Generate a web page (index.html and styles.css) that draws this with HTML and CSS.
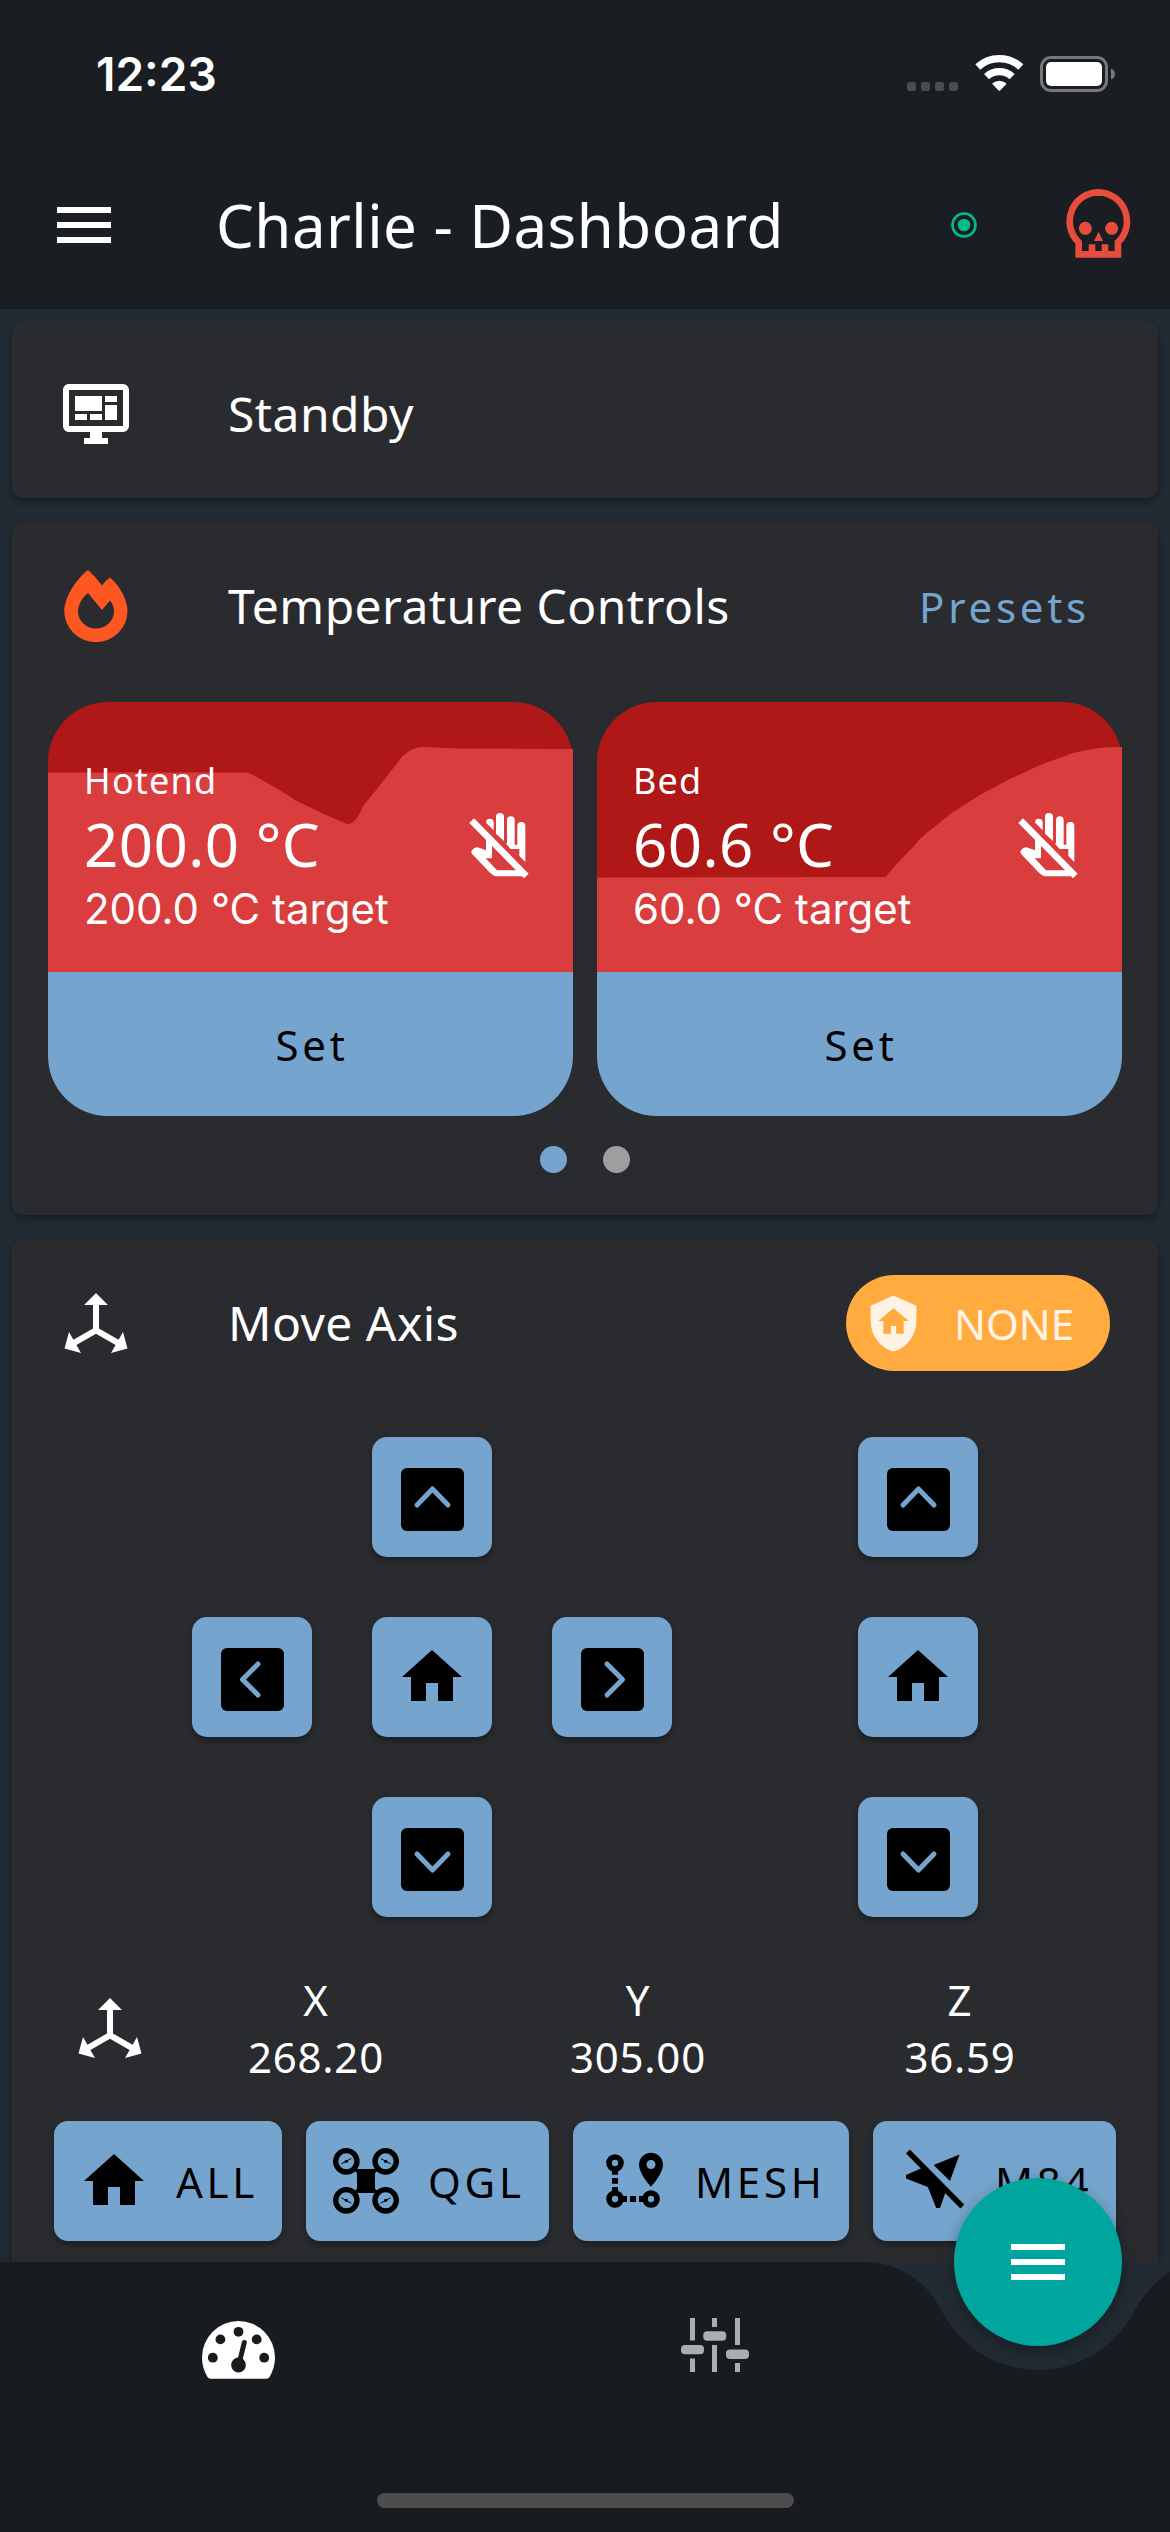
FILE: index.html
```html
<!DOCTYPE html>
<html lang="en">
<head>
<meta charset="utf-8">
<title>Charlie - Dashboard</title>
<link rel="stylesheet" href="styles.css">
</head>
<body>
<svg class="defs" width="0" height="0">
  <symbol id="i-menu" viewBox="0 0 24 24"><path d="M3 6H21V8H3V6M3 11H21V13H3V11M3 16H21V18H3V16Z"/></symbol>
  <symbol id="i-home" viewBox="0 0 24 24"><path d="M10,20V14H14V20H19V12H22L12,3L2,12H5V20H10Z"/></symbol>
  <symbol id="i-axis" viewBox="0 0 24 24"><path d="M12,2L16,6H13V13.85L19.53,17.61L21,15.03L22.5,20.5L17,21.96L18.53,19.35L12,15.58L5.47,19.35L7,21.96L1.5,20.5L3,15.03L4.47,17.61L11,13.85V6H8L12,2Z"/></symbol>
  <symbol id="i-hand" viewBox="27 68 180 198">
    <path d="M28 98L42 84L206 250L192 264Z"/>
    <path d="M78 97A11.500 11.500 0 0 1 101 97V120Z"/>
    <path d="M108 80A12 12 0 0 1 132 80V152L108 130Z"/>
    <path d="M141 89A11.500 11.500 0 0 1 164 89V163H172V107A12 12 0 0 1 196 107V215L178 197V176H152L138 160L141 158Z"/>
    <path fill-rule="evenodd" d="M78 142V180L57 172Q45 168 36 180Q31 186 37 192L90 247Q101 258 113 258H188L196 250L86 138ZM96 160V204H77L111 240H176Z"/>
  </symbol>
  <symbol id="i-up" viewBox="0 0 63 63"><rect width="63" height="63" rx="6"/><path class="chev" d="M16 37L31.500 21L47 37"/></symbol>
  <symbol id="i-down" viewBox="0 0 63 63"><rect width="63" height="63" rx="6"/><path class="chev" d="M16 26L31.500 42L47 26"/></symbol>
  <symbol id="i-left" viewBox="0 0 63 63"><rect width="63" height="63" rx="6"/><path class="chev" d="M37 16L21.500 31.500L37 47"/></symbol>
  <symbol id="i-right" viewBox="0 0 63 63"><rect width="63" height="63" rx="6"/><path class="chev" d="M26 16L41.500 31.500L26 47"/></symbol>
</svg>

<div class="phone">
  <header class="top">
    <div class="status">
      <span class="clock">12:23</span>
      <div class="signals">
        <div class="cell"><i></i><i></i><i></i><i></i></div>
        <svg class="wifi" viewBox="254 45 147 110">
          <path class="arc" d="M262.400 81A96 96 0 0 1 391.600 81"/>
          <path class="arc" d="M288.600 109.800A57 57 0 0 1 365.400 109.800"/>
          <path d="M306 130Q327 114 348 130Q348 132 346 134L330 151Q327 154 324 151L308 134Q306 132 306 130Z"/>
        </svg>
        <svg class="battery" viewBox="0 0 76 36">
          <rect x="1.500" y="1.500" width="65" height="33" rx="9.500" fill="none" stroke="#77787b" stroke-width="3"/>
          <rect x="6" y="6" width="56" height="24" rx="5" fill="#fff"/>
          <path d="M71 12.500Q75 14 75 18T71 23.500Z" fill="#77787b"/>
        </svg>
      </div>
    </div>
    <div class="appbar">
      <svg class="icon"><use href="#i-menu"/></svg>
      <h1>Charlie - Dashboard</h1>
      <svg class="online" viewBox="0 0 26 26"><circle cx="13" cy="13" r="11.500"/><circle class="core" cx="13" cy="13" r="6.300"/></svg>
      <svg class="skull" viewBox="0 0 196 208">
        <path class="line" d="M98 10A87 87 0 0 0 38 160V196H156V160A87 87 0 0 0 98 10Z"/>
        <circle cx="58" cy="118" r="19.500"/><circle cx="137" cy="118" r="19.500"/>
        <path d="M98 128L111 156H84ZM68 166H88V190H68ZM107 166H127V190H107Z"/>
      </svg>
    </div>
  </header>

  <main class="content">
    <section class="card standby">
      <div class="head">
        <svg class="icon" viewBox="0 0 24 24"><path d="M21,16V4H3V16H21M21,2A2,2 0 0,1 23,4V16A2,2 0 0,1 21,18H14V20H16V22H8V20H10V18H3C1.890,18 1,17.100 1,16V4C1,2.890 1.890,2 3,2H21M5,6H14V11H5V6M15,6H19V8H15V6M19,9V14H15V9H19M5,12H9V14H5V12M10,12H14V14H10V12Z"/></svg>
        <h2>Standby</h2>
      </div>
    </section>

    <section class="card temps">
      <div class="head">
        <svg class="icon flame" viewBox="0 0 72 72"><path fill-rule="evenodd" d="M28 0Q36 7 42 15.500Q46 10 50 7.500C61 17 67.500 31 67.500 41A31.500 31 0 0 1 4.300 41C4.300 28 16 9 28 0ZM28 23C22 28 18 35 18 41.500A18 17 0 0 0 54 41.500C54 38 53 34 50 30.500L42 40Z"/></svg>
        <h2>Temperature Controls</h2>
        <span class="presets">Presets</span>
      </div>
      <div class="tiles">
        <div class="tile">
          <div class="reading">
            <svg class="graph" viewBox="0 0 525 270"><path d="M0 70.500H197Q201 70.500 205 73L239 92.500Q246 98 254 101.500L277 112.500L297 121Q303 124 308 117L312 111Q315 103 318 100.500L334.700 79.800L353.800 55Q365 44 376 45Q400 46 411 46.500L525 47V270H0Z"/></svg>
            <div class="values"><p class="name">Hotend</p><p class="now">200.0 °C</p><p class="target">200.0 °C target</p></div>
            <svg class="hand"><use href="#i-hand"/></svg>
          </div>
          <button class="set">Set</button>
        </div>
        <div class="tile">
          <div class="reading">
            <svg class="graph" viewBox="0 0 525 270"><path d="M0 175.500L288.500 175L297 164.800L316 145Q322 137 329 131.500L355.500 110.500L382 93.500L412 77.500L442 63.400L476 51Q500 45 517 45H525V270H0Z"/></svg>
            <div class="values"><p class="name">Bed</p><p class="now">60.6 °C</p><p class="target">60.0 °C target</p></div>
            <svg class="hand"><use href="#i-hand"/></svg>
          </div>
          <button class="set">Set</button>
        </div>
      </div>
      <div class="pager"><i class="on"></i><i></i></div>
    </section>

    <section class="card move">
      <div class="head">
        <svg class="icon"><use href="#i-axis"/></svg>
        <h2>Move Axis</h2>
        <span class="chip">
          <svg viewBox="0 0 24 24"><path d="M11,13H13V16H16V11H18L12,6L6,11H8V16H11V13M12,1L21,5V11C21,16.550 17.160,21.740 12,23C6.840,21.740 3,16.550 3,11V5L12,1Z"/></svg>
          <span>NONE</span>
        </span>
      </div>
      <div class="pads">
        <div class="pad-xy">
          <button class="key n"><svg class="arrow"><use href="#i-up"/></svg></button>
          <button class="key w"><svg class="arrow"><use href="#i-left"/></svg></button>
          <button class="key c"><svg class="icon"><use href="#i-home"/></svg></button>
          <button class="key e"><svg class="arrow"><use href="#i-right"/></svg></button>
          <button class="key s"><svg class="arrow"><use href="#i-down"/></svg></button>
        </div>
        <div class="pad-z">
          <button class="key"><svg class="arrow"><use href="#i-up"/></svg></button>
          <button class="key"><svg class="icon"><use href="#i-home"/></svg></button>
          <button class="key"><svg class="arrow"><use href="#i-down"/></svg></button>
        </div>
      </div>
      <div class="position">
        <svg class="icon"><use href="#i-axis"/></svg>
        <div class="coord"><span>X</span><span>268.20</span></div>
        <div class="coord"><span>Y</span><span>305.00</span></div>
        <div class="coord"><span>Z</span><span>36.59</span></div>
      </div>
      <div class="actions">
        <button class="act all"><svg class="icon"><use href="#i-home"/></svg><span>ALL</span></button>
        <button class="act qgl">
          <svg class="icon" viewBox="30 45 216 216">
            <g class="ring"><circle cx="79" cy="94" r="32"/><circle cx="197" cy="94" r="32"/><circle cx="79" cy="211" r="32"/><circle cx="197" cy="211" r="32"/></g>
            <path d="M104 122L112 117H164L172 122L165 130V176L172 183L164 189H112L104 183L111 176V130Z"/>
            <g class="blade"><path d="M65 101L93 86"/><path d="M183 86L211 101"/><path d="M65 204L93 219"/><path d="M183 219L211 204"/></g>
            <circle cx="79" cy="94" r="5"/><circle cx="197" cy="94" r="5"/><circle cx="79" cy="211" r="5"/><circle cx="197" cy="211" r="5"/>
          </svg>
          <span>QGL</span>
        </button>
        <button class="act mesh">
          <svg class="icon" viewBox="831 45 216 216">
            <g class="node"><circle cx="885" cy="99" r="18"/><circle cx="885" cy="207" r="18"/><circle cx="993" cy="207" r="18"/></g>
            <path d="M876 122H894V134H876ZM876 144H894V161H876ZM876 171H894V184H876ZM908 198H921V216H908ZM930 198H948V216H930ZM957 198H970V216H957Z"/>
            <path fill-rule="evenodd" d="M993 68A36 36 0 0 1 1029 104C1029 131 993 170 993 170S957 131 957 104A36 36 0 0 1 993 68ZM993 90A13.500 13.500 0 1 0 993 117A13.500 13.500 0 1 0 993 90Z"/>
          </svg>
          <span>MESH</span>
        </button>
        <button class="act m84">
          <svg class="icon" viewBox="0 0 72 72"><path d="M12.800 4.500L67.200 59.500L63.400 63.500L9 8.500ZM62.600 9.500L36.600 20L53 36ZM9 30L23.200 23.700L28 22L50 44L48.400 47.400L43 63H39.200L30.800 42L9 33.500Z"/></svg>
          <span>M84</span>
        </button>
      </div>
    </section>
  </main>

  <footer class="nav">
    <svg class="nav-bg" viewBox="0 0 1170 270"><path d="M0 0H861Q916.500 0 942 49.500A108 108 0 0 0 1134 49.500Q1149 23 1170 10V270H0Z"/></svg>
    <svg class="gauge" viewBox="0 0 73 58">
      <path fill="#fff" d="M36.500 0A36.500 36.500 0 0 1 73 36.500C73 43.500 71 50 67.500 56Q66.500 57.800 64.500 57.800H8.500Q6.500 57.800 5.500 56C2 50 0 43.500 0 36.500A36.500 36.500 0 0 1 36.500 0Z"/>
      <g class="hole"><circle cx="10.800" cy="36.700" r="4.900"/><circle cx="18.400" cy="18.400" r="4.900"/><circle cx="36.500" cy="10.800" r="4.900"/><circle cx="54.700" cy="18.400" r="4.900"/><circle cx="62.200" cy="36.700" r="4.900"/><circle cx="36.500" cy="44" r="7.400"/></g>
      <path class="needle" d="M37 43L42.300 21.500"/>
    </svg>
    <svg class="sliders" viewBox="0 0 68 54"><path d="M9 0H14V22.600H9ZM9 40.500H14V54H9ZM31 0H36V9H31ZM31 27H36V54H31ZM54 0H59V27H54ZM54 45H59V54H54Z"/><rect y="27" width="23" height="9.300" rx="4"/><rect x="22.200" y="13.200" width="23" height="9.500" rx="4"/><rect x="45" y="31.500" width="23" height="9.500" rx="4"/></svg>
    <div class="indicator"></div>
    <button class="fab"><svg class="icon"><use href="#i-menu"/></svg></button>
  </footer>
</div>
</body>
</html>
```
FILE: styles.css
```css
* { box-sizing: border-box; }
body, h1, h2, p { margin: 0; font-weight: 400; }
body { background: #222b33; color: #fff; font-family: "Noto Sans", sans-serif; }
button { border: 0; margin: 0; padding: 0; color: #000; font: inherit; }
svg { display: block; flex: none; fill: currentColor; }
.defs { position: absolute; }
.icon { width: 72px; height: 72px; }

.phone { width: 1170px; height: 2532px; display: flex; flex-direction: column; overflow: hidden; }

.top { height: 309px; background: #1a1d21; flex: none; }
.status { height: 141px; padding: 56px 54px 0 96px; display: flex; justify-content: space-between; align-items: flex-start; }
.clock { font: 600 46px/36px Inter, sans-serif; }
.signals { display: flex; height: 36px; }
.cell { display: flex; gap: 5px; align-items: flex-end; padding-bottom: 1px; margin-right: 17px; }
.cell i { width: 9px; height: 9px; border-radius: 2.500px; background: #4a4c50; }
.wifi { width: 49px; height: 36.700px; margin: -1px 16px 0 0; }
.arc { fill: none; stroke: #fff; stroke-width: 22; }
.battery { width: 76px; height: 36px; }
.appbar { height: 168px; padding: 0 39px 0 48px; display: flex; align-items: center; }
.appbar h1 { font-size: 60px; line-height: 82px; letter-spacing: .450px; margin-left: 96px; flex: 1; white-space: nowrap; }
.online { width: 26px; height: 26px; margin-right: 89px; fill: none; stroke: #00bc8c; stroke-width: 2.600; }
.core { fill: #00bc8c; stroke: none; }
.skull { width: 65.300px; height: 69.300px; margin-top: -3px; fill: #e74c3c; }
.skull .line { fill: none; stroke: #e74c3c; stroke-width: 20; }

.content { flex: 1; min-height: 0; overflow: hidden; padding: 12px; display: flex; flex-direction: column; gap: 24px; }
.card { flex: none; background: #2a2b2f; border-radius: 12px; box-shadow: 0 4px 6px rgba(0,0,0,.2), 0 3px 12px rgba(0,0,0,.14); }
.head { height: 168px; padding: 0 48px; display: flex; align-items: center; }
.head h2 { font-size: 48px; line-height: 66px; letter-spacing: .450px; margin-left: 96px; flex: 1; white-space: nowrap; }
.standby { height: 177px; padding-top: 9px; }
.flame { color: #ff5722; }

.temps { height: 693px; }
.presets { color: #75a5ce; font-size: 42px; letter-spacing: 3.750px; margin-right: 20px; }
.tiles { display: flex; gap: 24px; padding: 12px 36px 0; }
.tile { width: 525px; }
.reading { position: relative; height: 270px; padding: 55px 44px 0 36px; background: #b01717; border-radius: 60px 60px 0 0; display: flex; justify-content: space-between; }
.graph { position: absolute; left: 0; top: 0; width: 525px; height: 270px; fill: #d93d3d; }
.values { position: relative; white-space: nowrap; }
.name { font-size: 36px; line-height: 48px; letter-spacing: 1.200px; }
.now { font-size: 60px; line-height: 78px; letter-spacing: .450px; }
.target { font: 400 42px/51px Inter, sans-serif; }
.hand { position: relative; width: 60px; height: 66px; margin-top: 56px; }
.set { display: block; width: 100%; height: 144px; background: #75a5ce; border-radius: 0 0 60px 60px; font-size: 42px; letter-spacing: 3.750px; padding: 1px 0 0 3px; }
.pager { display: flex; justify-content: center; gap: 36px; padding-top: 30px; }
.pager i { width: 27px; height: 27px; border-radius: 50%; background: #9e9e9e; }
.pager .on { background: #75a5ce; }

.move { height: 1200px; }
.chip { width: 264px; height: 96px; border-radius: 48px; background: #ffab40; color: #fff3e5; display: flex; align-items: center; padding-left: 17px; font-size: 42px; }
.chip svg { width: 61px; height: 61px; margin-right: 30px; }
.pads { display: flex; justify-content: space-between; padding: 30px 180px 0; }
.pad-xy { display: grid; grid-template: repeat(3, 120px) / repeat(3, 120px); grid-template-areas: ". n ." "w c e" ". s ."; gap: 60px; }
.n { grid-area: n; } .w { grid-area: w; } .c { grid-area: c; } .e { grid-area: e; } .s { grid-area: s; }
.pad-z { display: grid; gap: 60px; }
.key { width: 120px; height: 120px; display: flex; align-items: center; justify-content: center; background: #75a5ce; border-radius: 15px; box-shadow: 0 4px 6px rgba(0,0,0,.3); }
.arrow { width: 63px; height: 63px; margin-top: 5px; }
.chev { fill: none; stroke: #75a5ce; stroke-width: 5; stroke-linecap: round; stroke-linejoin: round; }
.position { display: flex; align-items: center; padding: 54px 37px 0 62px; font-size: 42px; line-height: 57px; }
.position .icon { margin-right: 9px; }
.coord { flex: 1; display: flex; flex-direction: column; align-items: center; }
.coord span { letter-spacing: .750px; }
.actions { display: flex; gap: 24px; padding: 36px 42px 0; }
.act { height: 120px; display: flex; align-items: center; gap: 26px; padding-left: 24px; background: #75a5ce; border-radius: 14px; box-shadow: 0 4px 6px rgba(0,0,0,.3); font-size: 42px; letter-spacing: 3.750px; white-space: nowrap; }
.act span { padding-top: 1px; }
.all { width: 228px; }
.qgl, .m84 { width: 243px; }
.mesh { width: 276px; }
.ring { fill: none; stroke: #000; stroke-width: 16; }
.blade { fill: none; stroke: #000; stroke-width: 3; stroke-linecap: round; }
.node { fill: none; stroke: #000; stroke-width: 17; }

.nav { position: relative; height: 270px; flex: none; display: flex; align-items: flex-start; padding: 56px 0 0 202px; }
.nav-bg { position: absolute; left: 0; top: 0; width: 1170px; height: 270px; fill: #181b20; }
.gauge { position: relative; width: 73px; height: 58px; margin: 3px 406px 0 0; }
.hole { fill: #181b20; }
.needle { fill: none; stroke: #181b20; stroke-width: 5; stroke-linecap: round; }
.sliders { position: relative; width: 68px; height: 54px; fill: #acadb0; }
.indicator { position: absolute; left: 377px; top: 231px; width: 417px; height: 15px; border-radius: 8px; background: #4d4d4d; }
.fab { position: absolute; left: 954px; top: -84px; width: 168px; height: 168px; border-radius: 50%; background: #00a69e; color: #fff; display: flex; align-items: center; justify-content: center; box-shadow: 0 6px 18px rgba(0,0,0,.3); }
```
